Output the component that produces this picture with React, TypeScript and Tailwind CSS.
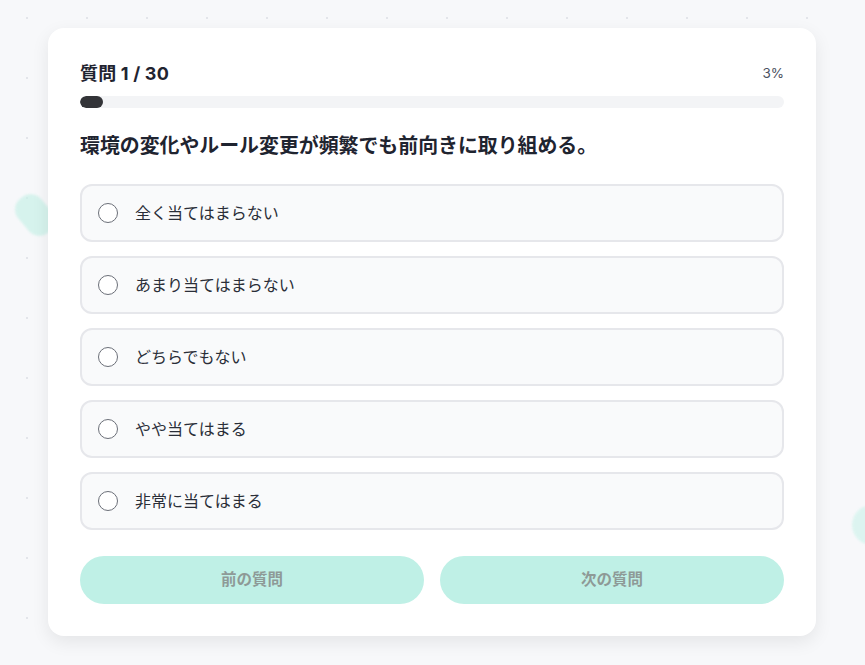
import React from "react";

const options = [
  "全く当てはまらない",
  "あまり当てはまらない",
  "どちらでもない",
  "やや当てはまる",
  "非常に当てはまる",
];

export default function App() {
  const current = 1;
  const total = 30;
  const percent = Math.round((current / total) * 100);

  return (
    <div
      className="relative min-h-[665px] w-full overflow-hidden bg-[#f7f8fa] bg-[radial-gradient(circle,#e3e5ea_1px,transparent_1.5px)] bg-[size:60px_60px] bg-[position:-3px_-12px]"
      style={{ fontFamily: 'Inter, "Noto Sans CJK JP", sans-serif' }}
    >
      {/* faint decorative blobs */}
      <div className="absolute left-[20px] top-[193px] h-[44px] w-[30px] -rotate-[40deg] rounded-[14px] bg-[#c9f1e8] opacity-70 blur-[1px]" />
      <div className="absolute left-[852px] top-[505px] h-[40px] w-[40px] rounded-full bg-[#d6f4ee] opacity-80 blur-[1px]" />

      <div className="relative ml-[48px] mt-[28px] w-[768px] rounded-2xl bg-white px-8 pb-8 pt-8 shadow-[0_6px_18px_rgba(0,0,0,0.08)]">
        <div className="flex h-[26px] items-center justify-between">
          <h2 className="text-[18px] font-bold tracking-[0.01em] text-[#1f2430]">
            質問 {current} / {total}
          </h2>
          <span className="text-[13.5px] text-[#4b5060]">{percent}%</span>
        </div>

        <div className="mt-[10px] h-3 w-full overflow-hidden rounded-full bg-[#f3f4f6]">
          <div className="h-full rounded-full bg-[#333438]" style={{ width: `${percent + 0.3}%` }} />
        </div>

        <p className="mt-6 text-[19.9px] font-bold leading-7 text-[#1f2430]">
          環境の変化やルール変更が頻繁でも前向きに取り組める。
        </p>

        <div className="mt-6 flex flex-col gap-[14px]">
          {options.map((label) => (
            <label
              key={label}
              className="flex h-[58px] cursor-pointer items-center gap-[17px] rounded-xl border-2 border-[#e6e7eb] bg-[#f9fafb] px-4"
            >
              <span className="h-5 w-5 flex-shrink-0 rounded-full border-[1.5px] border-[#6b6f78] bg-white" />
              <span className="text-[16px] text-[#2a2e38]">{label}</span>
            </label>
          ))}
        </div>

        <div className="mt-[26px] grid grid-cols-2 gap-4">
          <button className="h-12 rounded-full bg-[#bff0e6] text-[15.5px] font-bold text-[#8e9a97]">
            前の質問
          </button>
          <button className="h-12 rounded-full bg-[#bff0e6] text-[15.5px] font-bold text-[#8e9a97]">
            次の質問
          </button>
        </div>
      </div>
    </div>
  );
}
